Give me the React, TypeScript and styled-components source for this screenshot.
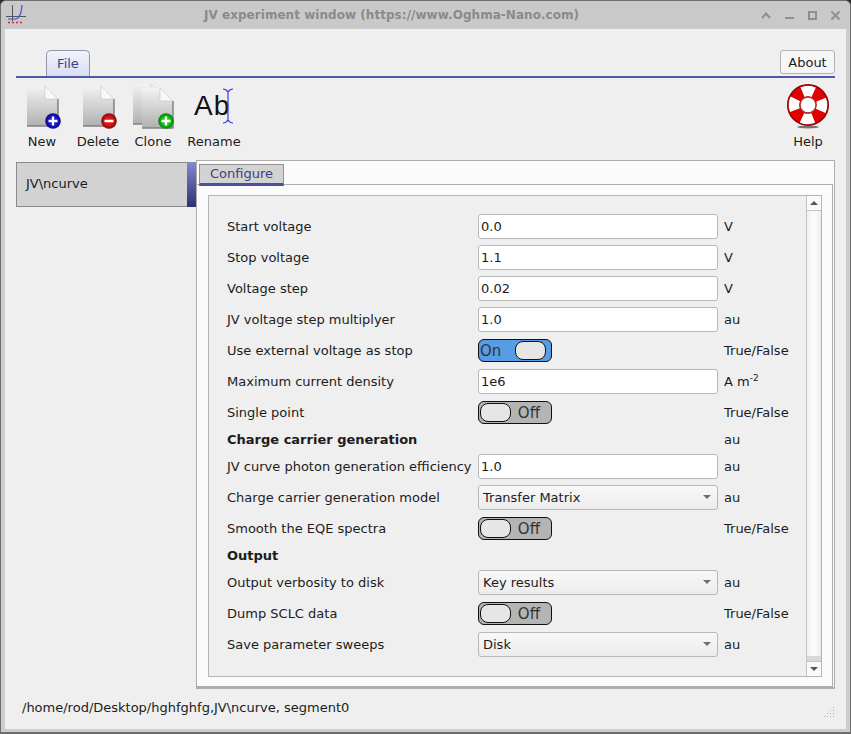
import React from "react";
import styled, { createGlobalStyle } from "styled-components";

const GlobalStyles = createGlobalStyle`
  * {
    margin: 0;
    padding: 0;
    box-sizing: border-box;
  }
  html, body {
    width: 851px;
    height: 734px;
    overflow: hidden;
    background: #2a2a2a;
    font-family: "DejaVu Sans", sans-serif;
    font-size: 13px;
    color: #1c1c1c;
  }
`;

type Row =
  | { kind: "input"; label: string; value: string; unit: React.ReactNode }
  | { kind: "switch"; label: string; on: boolean }
  | { kind: "head"; label: string; unit?: string }
  | { kind: "combo"; label: string; value: string };

const rows: Row[] = [
  { kind: "input", label: "Start voltage", value: "0.0", unit: "V" },
  { kind: "input", label: "Stop voltage", value: "1.1", unit: "V" },
  { kind: "input", label: "Voltage step", value: "0.02", unit: "V" },
  { kind: "input", label: "JV voltage step multiplyer", value: "1.0", unit: "au" },
  { kind: "switch", label: "Use external voltage as stop", on: true },
  {
    kind: "input",
    label: "Maximum current density",
    value: "1e6",
    unit: (
      <>
        A m<sup>-2</sup>
      </>
    ),
  },
  { kind: "switch", label: "Single point", on: false },
  { kind: "head", label: "Charge carrier generation", unit: "au" },
  { kind: "input", label: "JV curve photon generation efficiency", value: "1.0", unit: "au" },
  { kind: "combo", label: "Charge carrier generation model", value: "Transfer Matrix" },
  { kind: "switch", label: "Smooth the EQE spectra", on: false },
  { kind: "head", label: "Output" },
  { kind: "combo", label: "Output verbosity to disk", value: "Key results" },
  { kind: "switch", label: "Dump SCLC data", on: false },
  { kind: "combo", label: "Save parameter sweeps", value: "Disk" },
];

function AppIcon() {
  return (
    <svg width="22" height="22" viewBox="0 0 22 22">
      <path d="M7.5 1V17M1 12.5H21" stroke="#555" strokeWidth="1" fill="none" />
      <path d="M3 15H10Q16 15 17 1" stroke="#4a4ad8" strokeWidth="1.2" fill="none" />
      <path d="M3 18.5H19" stroke="#e82020" strokeWidth="1.6" strokeDasharray="2 2" fill="none" />
    </svg>
  );
}

function WindowButtons() {
  return (
    <WinButtons>
      <svg width="10" height="8" viewBox="0 0 10 8">
        <path d="M1 7L5 2.5L9 7" stroke="#8f8f8f" strokeWidth="2" fill="none" />
      </svg>
      <svg width="9" height="8" viewBox="0 0 9 8">
        <path d="M0 7H9" stroke="#8f8f8f" strokeWidth="2" fill="none" />
      </svg>
      <svg width="9" height="9" viewBox="0 0 9 9">
        <rect x="1" y="1" width="7" height="7" stroke="#8f8f8f" strokeWidth="2" fill="none" />
      </svg>
      <svg width="9" height="9" viewBox="0 0 9 9">
        <path d="M0.5 0.5L8.5 8.5M8.5 0.5L0.5 8.5" stroke="#8f8f8f" strokeWidth="2" fill="none" />
      </svg>
    </WinButtons>
  );
}

function Page({ x = 0, y = 0 }: { x?: number; y?: number }) {
  return (
    <g transform={`translate(${x} ${y})`}>
      <path d="M0 0H18L31 13V40.5H0Z" fill="url(#pageFill)" />
      <path d="M0 40H31V13" stroke="#6a6a6a" strokeWidth="1.2" fill="none" />
      <path d="M18 0L31 13H18Z" fill="#f8f8f8" stroke="#c4c4c4" strokeWidth="0.6" />
    </g>
  );
}

function Badge({ cx, cy, color, dark, plus }: { cx: number; cy: number; color: string; dark: string; plus: boolean }) {
  const id = `badge${color.slice(1)}`;
  return (
    <g>
      <defs>
        <radialGradient id={id} cx="0.5" cy="0.5" r="0.55">
          <stop offset="0.4" stopColor={color} />
          <stop offset="1" stopColor={dark} />
        </radialGradient>
      </defs>
      <circle cx={cx} cy={cy} r="7.8" fill={`url(#${id})`} />
      <path
        d={plus ? `M${cx - 4.5} ${cy}H${cx + 4.5}M${cx} ${cy - 4.5}V${cy + 4.5}` : `M${cx - 4.5} ${cy}H${cx + 4.5}`}
        stroke="#fff"
        strokeWidth="2.4"
      />
    </g>
  );
}

function PageGradient() {
  return (
    <defs>
      <linearGradient id="pageFill" x1="0" y1="0" x2="0" y2="1">
        <stop offset="0" stopColor="#f2f2f2" />
        <stop offset="1" stopColor="#b0b0b0" />
      </linearGradient>
    </defs>
  );
}

function NewIcon() {
  return (
    <svg width="36" height="46" viewBox="-3 -2 36 46" overflow="visible">
      <PageGradient />
      <Page />
      <Badge cx={26} cy={35} color="#1a1ae0" dark="#08086c" plus />
    </svg>
  );
}

function DeleteIcon() {
  return (
    <svg width="36" height="46" viewBox="-3 -2 36 46" overflow="visible">
      <PageGradient />
      <Page />
      <Badge cx={26} cy={35} color="#e01818" dark="#760808" plus={false} />
    </svg>
  );
}

function CloneIcon() {
  return (
    <svg width="42" height="46" viewBox="0 -2 42 46" overflow="visible">
      <PageGradient />
      <Page x={1} y={-2} />
      <Page x={10} y={2} />
      <Badge cx={34} cy={35} color="#18d018" dark="#086e08" plus />
    </svg>
  );
}

function RenameIcon() {
  return (
    <svg width="44" height="46" viewBox="0 0 44 46">
      <text x="2" y="31" fontFamily="Liberation Sans" fontSize="28" letterSpacing="1" fill="#111">
        Ab
      </text>
      <path
        d="M31 5Q34 5 36 8Q38 5 41 5M36 8V36M31 39Q34 39 36 36Q38 39 41 39"
        stroke="#3a3ae0"
        strokeWidth="1.2"
        fill="none"
      />
    </svg>
  );
}

function HelpIcon() {
  return (
    <svg width="44" height="46" viewBox="0 0 44 46">
      <ellipse cx="22" cy="43" rx="11" ry="1.4" fill="#777" />
      <circle cx="22" cy="21" r="20.3" fill="#e00000" stroke="#8c0000" strokeWidth="1.4" />
      <circle
        cx="22"
        cy="21"
        r="14"
        fill="none"
        stroke="#fff"
        strokeWidth="10.5"
        strokeDasharray="11.4 10.6"
        transform="rotate(-113 22 21)"
      />
      <circle cx="22" cy="21" r="8" fill="#fff" stroke="#b03030" strokeWidth="1.4" />
    </svg>
  );
}

function Toggle({ on }: { on: boolean }) {
  return (
    <SwitchBody $on={on}>
      {on && <SwitchText>On</SwitchText>}
      <Knob />
      {!on && <SwitchText>Off</SwitchText>}
    </SwitchBody>
  );
}

function Combo({ value }: { value: string }) {
  return (
    <ComboBox>
      {value}
      <ComboArrow />
    </ComboBox>
  );
}

function Field({ row }: { row: Row }) {
  if (row.kind === "head") {
    return (
      <>
        <HeadLabel>{row.label}</HeadLabel>
        <span />
        <Unit>{row.unit}</Unit>
      </>
    );
  }
  return (
    <>
      <Label>{row.label}</Label>
      {row.kind === "input" && <TextInput readOnly value={row.value} />}
      {row.kind === "switch" && <Toggle on={row.on} />}
      {row.kind === "combo" && <Combo value={row.value} />}
      <Unit>{row.kind === "input" ? row.unit : row.kind === "switch" ? "True/False" : "au"}</Unit>
    </>
  );
}

export default function App() {
  return (
    <Win>
      <GlobalStyles />
      <TitleBar>
        <AppIcon />
        <TitleText>JV experiment window (https://www.Oghma-Nano.com)</TitleText>
        <WindowButtons />
      </TitleBar>
      <Content>
        <TabRow>
          <FileTab>File</FileTab>
          <AboutButton>About</AboutButton>
        </TabRow>
        <Toolbar>
          <ToolButton $width={52}>
            <IconSlot>
              <NewIcon />
            </IconSlot>
            New
          </ToolButton>
          <ToolButton $width={60}>
            <IconSlot>
              <DeleteIcon />
            </IconSlot>
            Delete
          </ToolButton>
          <ToolButton $width={50}>
            <IconSlot>
              <CloneIcon />
            </IconSlot>
            Clone
          </ToolButton>
          <ToolButton $width={72}>
            <IconSlot>
              <RenameIcon />
            </IconSlot>
            Rename
          </ToolButton>
          <Spacer />
          <ToolButton $width={54}>
            <IconSlot>
              <HelpIcon />
            </IconSlot>
            Help
          </ToolButton>
        </Toolbar>
        <Main>
          <SideList>
            <SideItem>
              <SideLabel>JV\ncurve</SideLabel>
              <SideMarker />
            </SideItem>
          </SideList>
          <Panel>
            <PanelTab>Configure</PanelTab>
            <Pane>
              <ScrollArea>
                <FormGrid>
                  {rows.map((row) => (
                    <Field key={row.label} row={row} />
                  ))}
                </FormGrid>
                <ScrollBar>
                  <ScrollButton>
                    <ArrowUp />
                  </ScrollButton>
                  <ScrollThumb />
                  <ScrollGroove />
                  <ScrollButton>
                    <ArrowDown />
                  </ScrollButton>
                </ScrollBar>
              </ScrollArea>
            </Pane>
          </Panel>
        </Main>
        <StatusBar>
          /home/rod/Desktop/hghfghfg,JV\ncurve, segment0
          <Grip>
            <svg width="12" height="12" viewBox="0 0 12 12">
              <path
                d="M10.5 1V11M7.5 4V11M4.5 7V11M1.5 10V11"
                stroke="#b4b4b4"
                strokeWidth="1"
                strokeDasharray="1 2"
              />
            </svg>
          </Grip>
        </StatusBar>
      </Content>
    </Win>
  );
}

const Win = styled.div`
  width: 851px;
  height: 734px;
  display: flex;
  flex-direction: column;
  background: #cdcdcd;
  border: 1px solid #6e6e6e;
  border-bottom-width: 2px;
  border-radius: 6px 6px 0 0;
  overflow: hidden;
`;
const TitleBar = styled.div`
  height: 28px;
  flex: none;
  display: flex;
  align-items: center;
  padding: 0 10px 0 4px;
  background: #c9c9c9;
`;
const TitleText = styled.div`
  flex: 1;
  text-align: center;
  font-weight: 700;
  font-size: 12px;
  letter-spacing: 0.04px;
  color: #8a8a8a;
  padding-right: 5px;
`;
const WinButtons = styled.div`
  flex: none;
  display: flex;
  align-items: center;
  gap: 14px;
`;
const Content = styled.div`
  flex: 1;
  min-height: 0;
  display: flex;
  flex-direction: column;
  margin: 0 4px 3px 4px;
  background: #efefef;
  padding: 0 11px 0 11px;
`;
const TabRow = styled.div`
  height: 49px;
  flex: none;
  display: flex;
  align-items: flex-end;
  justify-content: space-between;
  padding-left: 30px;
  border-bottom: 2px solid #4f58a8;
`;
const FileTab = styled.div`
  width: 44px;
  height: 26px;
  display: flex;
  align-items: center;
  justify-content: center;
  background: linear-gradient(#f2f3fb, #d9ddf5);
  border: 1px solid #9296ac;
  border-bottom: none;
  border-radius: 5px 5px 0 0;
  color: #3d4088;
`;
const AboutButton = styled.div`
  width: 55px;
  height: 24px;
  margin-bottom: 2px;
  display: flex;
  align-items: center;
  justify-content: center;
  background: #f6f6f6;
  border: 1px solid #b2b2b2;
  border-radius: 3px;
`;
const Toolbar = styled.div`
  height: 82px;
  flex: none;
  display: flex;
  align-items: flex-start;
`;
const Spacer = styled.div`
  flex: 1;
`;
const ToolButton = styled.div<{ $width: number }>`
  width: ${(p) => p.$width}px;
  display: flex;
  flex-direction: column;
  align-items: center;
  padding-top: 6px;
`;
const IconSlot = styled.div`
  height: 50px;
  display: flex;
  justify-content: center;
  & svg {
    display: block;
  }
`;
const Main = styled.div`
  height: 529px;
  flex: none;
  display: flex;
  align-items: flex-start;
`;
const SideList = styled.div`
  width: 180px;
  padding-top: 2px;
  flex: none;
`;
const SideItem = styled.div`
  height: 45px;
  display: flex;
  background: #d2d2d2;
  border: 1px solid #8a8a8a;
  border-right: none;
`;
const SideLabel = styled.div`
  flex: 1;
  padding: 0 0 2px 9px;
  align-self: center;
`;
const SideMarker = styled.div`
  width: 9px;
  margin: -1px 0;
  background: linear-gradient(#8189cf, #2d3072);
`;
const Panel = styled.div`
  flex: 1;
  height: 529px;
  display: flex;
  flex-direction: column;
  background: #fbfbfb;
  border: 1px solid #adadad;
  border-bottom-width: 2px;
`;
const PanelTab = styled.div`
  width: 85px;
  height: 22px;
  margin: 3px 0 0 2px;
  padding-bottom: 1px;
  flex: none;
  display: flex;
  align-items: center;
  justify-content: center;
  background: #d3d3d3;
  border: 1px solid #929292;
  border-bottom: 3px solid #4a50a0;
  color: #3d4088;
  position: relative;
  z-index: 1;
`;
const Pane = styled.div`
  flex: 1;
  min-height: 0;
  margin: -2px 1px 0 0;
  padding: 10px 10px 9px 11px;
  background: #fbfbfb;
  border-top: 1px solid #adadad;
  border-right: 1px solid #adadad;
  border-bottom: 1px solid #adadad;
`;
const ScrollArea = styled.div`
  height: 100%;
  display: flex;
  background: #efefef;
  border: 1px solid #b4b4b4;
`;
const FormGrid = styled.div`
  flex: 1;
  align-self: flex-start;
  display: grid;
  grid-template-columns: 245px 240px auto;
  column-gap: 6px;
  row-gap: 6px;
  align-items: center;
  padding: 18px 0 0 18px;
`;
const Label = styled.div`
  white-space: nowrap;
`;
const HeadLabel = styled(Label)`
  font-weight: 700;
  height: 17px;
  line-height: 17px;
`;
const Unit = styled.div`
  white-space: nowrap;
  & sup {
    font-size: 9px;
    line-height: 0;
  }
`;
const TextInput = styled.input`
  width: 240px;
  height: 25px;
  padding: 0 2px;
  background: #fff;
  border: 1px solid #b8b8b8;
  border-radius: 3px;
  font: inherit;
  color: inherit;
  outline: none;
`;
const ComboBox = styled.div`
  width: 240px;
  height: 25px;
  position: relative;
  display: flex;
  align-items: center;
  padding: 0 4px;
  background: linear-gradient(#f8f8f8, #ececec);
  border: 1px solid #b8b8b8;
  border-radius: 3px;
`;
const ComboArrow = styled.span`
  position: absolute;
  right: 6px;
  top: 9px;
  border-left: 4px solid transparent;
  border-right: 4px solid transparent;
  border-top: 4px solid #6e6e6e;
`;
const SwitchBody = styled.div<{ $on: boolean }>`
  width: 74px;
  height: 23px;
  margin: 1px 0;
  display: flex;
  align-items: center;
  justify-content: space-between;
  padding: ${(p) => (p.$on ? "0 5px 0 1px" : "0 11px 0 1px")};
  background: ${(p) => (p.$on ? "#569de5" : "#b4b4b4")};
  border: 1px solid #111;
  border-radius: 6px;
`;
const Knob = styled.div`
  width: 31px;
  height: 19px;
  background: #e6e6e6;
  border: 1px solid #111;
  border-radius: 8px;
`;
const SwitchText = styled.span`
  font-size: 15px;
  color: #333;
`;
const ScrollBar = styled.div`
  width: 15px;
  flex: none;
  display: flex;
  flex-direction: column;
  border-left: 1px solid #c4c4c4;
`;
const ScrollButton = styled.div`
  height: 14px;
  flex: none;
  display: flex;
  align-items: center;
  justify-content: center;
  background: #fafafa;
`;
const ArrowUp = styled.span`
  border-left: 4px solid transparent;
  border-right: 4px solid transparent;
  border-bottom: 4px solid #555;
`;
const ArrowDown = styled.span`
  border-left: 4px solid transparent;
  border-right: 4px solid transparent;
  border-top: 4px solid #555;
`;
const ScrollThumb = styled.div`
  flex: 1;
  background: linear-gradient(90deg, #f0f0f0, #fdfdfd 50%, #ececec);
  border-top: 1px solid #c4c4c4;
`;
const ScrollGroove = styled.div`
  height: 6px;
  flex: none;
  background: #d8d8d8;
  border-bottom: 1px solid #c4c4c4;
`;
const StatusBar = styled.div`
  flex: 1;
  position: relative;
  display: flex;
  align-items: center;
  padding: 0 0 4px 6px;
`;
const Grip = styled.div`
  position: absolute;
  right: 0;
  bottom: 11px;
  & svg {
    display: block;
  }
`;
